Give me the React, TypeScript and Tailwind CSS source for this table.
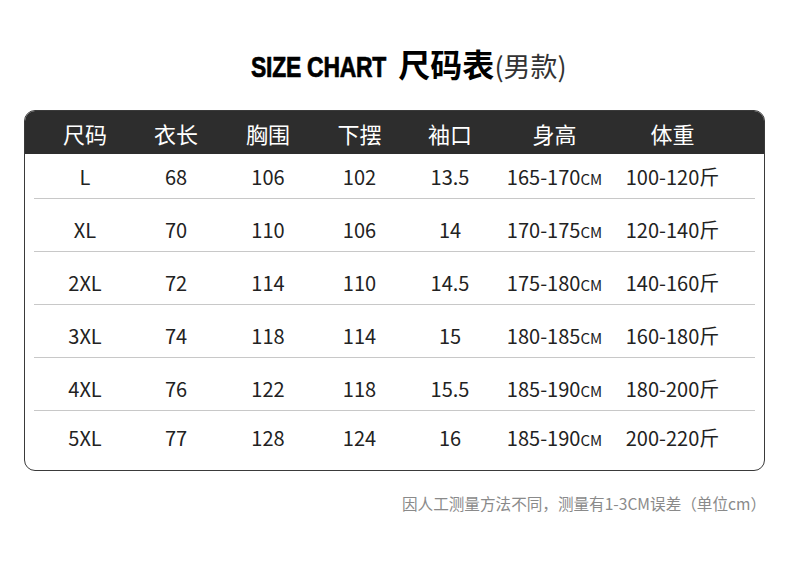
const rows = [
  ['L', '68', '106', '102', '13.5', '165-170', '100-120'],
  ['XL', '70', '110', '106', '14', '170-175', '120-140'],
  ['2XL', '72', '114', '110', '14.5', '175-180', '140-160'],
  ['3XL', '74', '118', '114', '15', '180-185', '160-180'],
  ['4XL', '76', '122', '118', '15.5', '185-190', '180-200'],
  ['5XL', '77', '128', '124', '16', '185-190', '200-220'],
];

const headers = ['尺码', '衣长', '胸围', '下摆', '袖口', '身高', '体重'];

const cols = 'grid grid-cols-[90px_92px_92px_91px_90px_119px_117px] pl-[15px]';

// row heights and text offsets taken from the picture
const rowStyle = [
  'h-[44px] pt-[13px]',
  'h-[52px] pt-[21px]',
  'h-[52px] pt-[21px]',
  'h-[52px] pt-[21px]',
  'h-[52px] pt-[21px]',
  'h-[59px] pt-[17px]',
];

export default function App() {
  return (
    <div className="w-[790px] h-[580px] bg-white font-['Noto_Sans_CJK_SC','Noto_Sans',sans-serif] text-[#222]">
      <div className="flex items-baseline justify-center pt-[47px] pl-[28px] h-[110px]">
        {/* condensed heading: no narrow font installed, so squeeze Liberation Sans */}
        <span className="inline-block w-[135px] whitespace-nowrap">
          <span className="inline-block origin-left scale-x-[0.79] font-['Liberation_Sans',Arial,sans-serif] font-bold text-[29px] leading-none tracking-[-0.3px] text-black [-webkit-text-stroke:0.7px_black]">
            SIZE CHART
          </span>
        </span>
        <span className="ml-[12px] font-bold text-[32px] leading-none text-black">尺码表</span>
        <span className="text-[27px] leading-none text-[#333]">(男款)</span>
      </div>

      <div className="mx-[24px] w-[741px] border border-[#3a3a3a] rounded-[11px] overflow-hidden">
        <div className={`${cols} h-[43px] items-center bg-[#2d2d2d] text-white text-[22px] leading-none`}>
          {headers.map((h) => (
            <div key={h} className="text-center">{h}</div>
          ))}
        </div>
        {rows.map((r, i) => (
          <div key={r[0]}>
            {i > 0 && <div className="mx-[9px] h-px bg-[#c8c8c8]" />}
            <div className={`${cols} ${rowStyle[i]} text-[20px] leading-[20px]`}>
              {r.slice(0, 5).map((v, j) => (
                <div key={j} className="text-center">{v}</div>
              ))}
              <div className="text-center">
                {r[5]}
                <span className="text-[15px]">CM</span>
              </div>
              <div className="text-center">{r[6]}斤</div>
            </div>
          </div>
        ))}
      </div>

      <div className="flex justify-end pr-[24px] pt-[25px] text-[15.6px] leading-none text-[#8a8a8a]">
        因人工测量方法不同，测量有1-3CM误差（单位cm）
      </div>
    </div>
  );
}
